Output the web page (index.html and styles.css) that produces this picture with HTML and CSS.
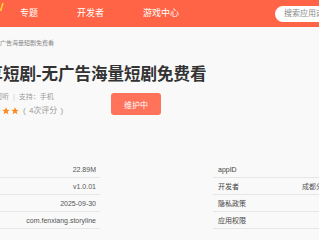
FILE: index.html
```html
<!DOCTYPE html>
<html lang="zh-CN">

<head>
	<meta charset="UTF-8">
	<meta name="viewport" content="width=device-width, initial-scale=1.0">
	<title>分享短剧-无广告海量短剧免费看</title>
	<link rel="stylesheet" href="styles.css">
</head>

<body>
	<!-- Header -->
	<div class="header">
		<div class="logo">
			<svg width="4" height="27" viewBox="0 0 4 27">
				<path d="M0.5 11 L3 3" stroke="#ffd43b" stroke-width="1.6" fill="none" />
			</svg>
		</div>
		<div class="nav">
			<a href="#">专题</a>
			<a href="#">开发者</a>
			<a href="#">游戏中心</a>
		</div>
		<div class="search">
			<input type="text" placeholder="搜索应用或游戏">
		</div>
	</div>

	<div class="page">
		<div class="crumb">分享短剧-无广告海量短剧免费看</div>

		<div class="app">
			<h1 class="app-title">分享短剧-无广告海量短剧免费看</h1>
			<div class="app-row">
				<div class="app-meta">
					<div class="meta-line">影音视听 <span class="sep">|</span> 支持：手机</div>
					<div class="rating">
						<span class="stars">
							<svg width="44" height="8" viewBox="0 0 44 8">
								<path id="star" d="M4 0.3 L5.1 2.7 L7.7 2.9 L5.7 4.6 L6.3 7.2 L4 5.8 L1.7 7.2 L2.3 4.6 L0.3 2.9 L2.9 2.7 Z" fill="#ff8a1f" />
								<use href="#star" x="9" />
								<use href="#star" x="18" />
								<use href="#star" x="27" />
								<use href="#star" x="36" />
							</svg>
						</span>
						<span class="count">( 4次评分 )</span>
					</div>
				</div>
				<button class="btn">维护中</button>
			</div>
		</div>

		<!-- Info tables -->
		<div class="info">
			<div class="table left">
				<div class="row"><span class="label">大小</span><span class="value">22.89M</span></div>
				<div class="row"><span class="label">版本</span><span class="value">v1.0.01</span></div>
				<div class="row"><span class="label">更新</span><span class="value">2025-09-30</span></div>
				<div class="row"><span class="label">包名</span><span class="value">com.fenxiang.storyline</span></div>
			</div>
			<div class="table right">
				<div class="row"><span class="label">appID</span><span class="value"></span></div>
				<div class="row"><span class="label">开发者</span><span class="value">成都分享网络科技有限公司</span></div>
				<div class="row"><span class="label">隐私政策</span><span class="value"></span></div>
				<div class="row"><span class="label">应用权限</span><span class="value"></span></div>
			</div>
		</div>
	</div>
</body>

</html>
```

FILE: styles.css
```css
body {
	font-family: "Liberation Sans", "Noto Sans CJK SC", sans-serif;
	background-color: #f9f9f9;
	color: #333;
	margin: 0;
	padding: 0;
	width: 319px;
	height: 240px;
	overflow: hidden;
}

/* Header */
.header {
	height: 27px;
	background-color: #fe6445;
	display: flex;
	align-items: center;
	white-space: nowrap;
}

.logo {
	width: 4px;
	height: 27px;
	margin-right: 16px;
	flex-shrink: 0;
}

.logo svg {
	display: block;
}

.nav {
	display: flex;
	gap: 39px;
	flex-shrink: 0;
}

.nav a {
	color: #fff;
	text-decoration: none;
	font-size: 9px;
	line-height: 27px;
}

.search {
	margin-left: 96px;
	flex-shrink: 0;
}

.search input {
	width: 90px;
	height: 16px;
	box-sizing: border-box;
	border: none;
	border-radius: 8px;
	background: #fff;
	padding: 0 9px;
	font-size: 8px;
	font-family: "Liberation Sans", "Noto Sans CJK SC", sans-serif;
	outline: none;
	display: block;
}

.search input::placeholder {
	color: #888;
}

/* Main */
.page {
	margin-left: -24px;
	white-space: nowrap;
}

.crumb {
	font-size: 6px;
	color: #888;
	margin-left: -8px;
	padding-top: 13px;
	line-height: 6px;
}

.app-title {
	font-size: 16.5px;
	font-weight: bold;
	color: #333;
	margin: 20px 0 0 -6px;
	line-height: 16px;
}

.app-row {
	display: flex;
	align-items: flex-start;
	margin-top: 6px;
}

.app-meta {
	width: 135px;
	flex-shrink: 0;
}

.meta-line {
	font-size: 7px;
	color: #999;
	line-height: 10px;
	margin: 4px 0 0 5px;
}

.sep {
	color: #ccc;
	margin: 0 2px;
}

.rating {
	display: flex;
	align-items: center;
	margin: 4px 0 0 -1px;
	line-height: 10px;
}

.stars svg {
	display: block;
}

.count {
	font-size: 8px;
	color: #999;
	margin-left: 4px;
	word-spacing: 1px;
}

.btn {
	width: 50px;
	height: 22px;
	margin-top: 5px;
	background-color: #ff735a;
	color: #fff;
	border: none;
	border-radius: 3px;
	font-size: 8px;
	font-family: "Liberation Sans", "Noto Sans CJK SC", sans-serif;
	padding: 0;
	cursor: pointer;
}

/* Info tables */
.info {
	display: flex;
	gap: 113px;
	margin-top: 45px;
}

.table {
	width: 124px;
	flex-shrink: 0;
}

.row {
	display: flex;
	height: 16px;
	align-items: center;
	border-bottom: 1px solid #e6e6e6;
	font-size: 7px;
}

.left .row {
	justify-content: space-between;
	padding-right: 4px;
}

.left .label {
	color: #666;
}

.left .value {
	color: #555;
}

.right .row {
	padding-left: 5px;
}

.right .label {
	width: 84px;
	color: #444;
	flex-shrink: 0;
}

.right .value {
	color: #555;
}
```
